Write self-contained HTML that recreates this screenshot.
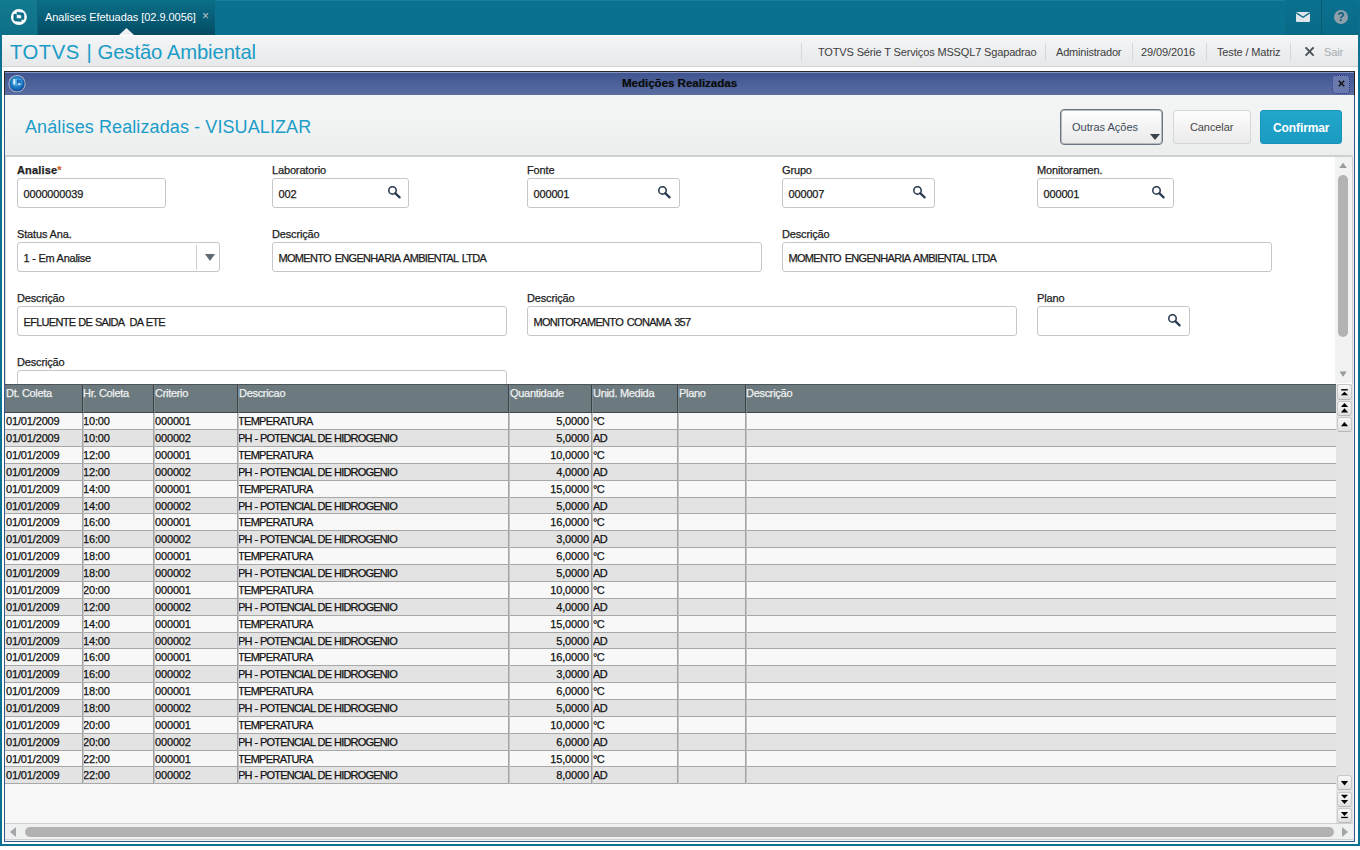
<!DOCTYPE html>
<html><head><meta charset="utf-8"><style>
*{box-sizing:border-box;margin:0;padding:0}
html,body{width:1360px;height:850px;overflow:hidden;background:#fff;font-family:"Liberation Sans",sans-serif;font-size:11px;color:#222;position:relative}
.abs{position:absolute}
.t{position:absolute;white-space:pre;line-height:1;letter-spacing:-0.15px}
.uc,.inp .v.uc{letter-spacing:-0.7px;word-spacing:1.5px}
/* frame */
#frame{position:absolute;left:0;top:0;width:1360px;height:846px;background:#0b7390}
#inner{position:absolute;left:2px;top:35px;width:1356px;height:809px;background:#fff}
/* top bar */
#topbar{position:absolute;left:0;top:0;width:1360px;height:35px;background:#0a7290;border-top:1px solid #17809a}
#logo{position:absolute;left:0;top:0;width:38px;height:35px;background:linear-gradient(#137a8f,#0d7088);border-right:1px solid #0b6379}
#tab{position:absolute;left:38px;top:0;width:177px;height:35px;background:linear-gradient(#0b6f88,#06556e 75%,#054a63)}
#mailbox{position:absolute;left:1285px;top:0;width:37px;height:35px;background:linear-gradient(#0b7190,#086a86);border-right:1px solid #0a5a72}
#helpbox{position:absolute;left:1322px;top:0;width:37px;height:35px;background:linear-gradient(#0b7190,#086a86)}
/* header */
#header{position:absolute;left:2px;top:35px;width:1356px;height:32px;background:linear-gradient(#f4f5f6,#e6e8ea);border-top:1px solid #fff;border-bottom:1px solid #d3d6d9}
.hsep{position:absolute;top:7px;width:1px;height:18px;background:#d5d8db}
/* dialog */
#dlg{position:absolute;left:4px;top:71px;width:1351px;height:771px;background:linear-gradient(#f3f4f4 24px,#f2f3f3 50px,#eceded 84px,#eceded);border:1px solid #2e5a8f;border-top:1px solid #2a2a2a}
#dtitle{position:absolute;left:5px;top:72px;width:1349px;height:23px;background:linear-gradient(#40558f,#4a5f98 40%,#5a6da1);border-top:1px solid #8595c4}
.btn{position:absolute;border-radius:3px}
/* form */
#form{position:absolute;left:5px;top:155px;width:1348px;height:229px;background:#fff;border-top:2px solid #cdd0d2;border-left:1px solid #d4d4d4;border-right:1px solid #cfcfcf;border-top-right-radius:3px}
.lbl{position:absolute;white-space:pre;line-height:1;letter-spacing:-0.15px;color:#1e1e1e}
.inp{position:absolute;height:30px;background:#fff;border:1px solid #c4c7cb;border-radius:3px}
.inp .v{position:absolute;left:5.5px;top:9.5px;white-space:pre;line-height:1;color:#1a1a1a;letter-spacing:-0.15px}
.mag{position:absolute;width:14px;height:14px}
/* grid */
#ghead{position:absolute;left:5px;top:384px;width:1331px;height:29px;background:#6c7a7f;border-top:1px solid #4e5558;border-bottom:1px solid #3f4548}
.hdiv{position:absolute;top:0;width:2px;height:28px;background:#3c4245;border-right:1px solid #7d898e}
.htx{position:absolute;top:2.5px;white-space:pre;line-height:1;color:#eef0f0;letter-spacing:-0.3px}
#gbody{position:absolute;left:5px;top:413px;width:1331px;height:410px;background:#f8f8f8}
.row{position:absolute;left:5px;width:1331px}
.rsep{position:absolute;left:5px;width:1331px;height:1px;background:#a8a8a8}
.vline{position:absolute;width:2px;background:#a3a3a3;border-right:1px solid #c4c4c4}
.c{position:absolute;top:3px;white-space:pre;line-height:1;color:#111;letter-spacing:-0.15px;-webkit-text-stroke:0.25px #111}
.c.uc,.inp .v.uc{letter-spacing:-0.7px;word-spacing:1.5px}
.c.r{text-align:right}
#gscroll{position:absolute;left:1336px;top:384px;width:17px;height:439px;background:#e4e4e4}
.sbtn{position:absolute;left:1337px;width:15px;height:15px;border-radius:3px;background:linear-gradient(#f8f8f8,#e0e0e0);border:1px solid #c8c8c8;border-bottom-color:#b8b8b8}
#hscroll{position:absolute;left:5px;top:823px;width:1348px;height:17px;background:#eff0f0;border-top:1px solid #cfcfcf;border-bottom:1px solid #d0d0d0}

.tk{-webkit-text-stroke:0.25px currentColor}
.lbl,.inp .v,.htx{-webkit-text-stroke:0.25px currentColor}

</style></head><body>
<div id="frame"></div><div id="inner"></div>
<div id="topbar"></div>
<div id="logo"><svg class="abs" style="left:0;top:0" width="38" height="35" viewBox="0 0 38 35"><circle cx="18.9" cy="17.1" r="8" fill="#fff"/><g fill="#0b6d87" stroke="#0b6d87" stroke-width="0.5" stroke-linejoin="round"><path d="M17 12.1 L23.2 12.9 L24 13.9 L23.9 19.6 L21.4 19.4 L21.3 15.1 L17 14.6Z"/><path d="M14.2 14 L16.5 14.2 L16.5 18.2 L21.3 18.7 L21.2 21.5 L15.2 21 L13.8 20.1 L13.8 14.6Z"/></g></svg></div>
<div id="tab"><span class="t" style="left:7px;top:12px;color:#fff;font-size:11px;letter-spacing:-0.05px">Analises Efetuadas [02.9.0056]</span><span class="t" style="left:164px;top:10px;color:#b9c6cf;font-size:12px">×</span>
<svg class="abs" style="left:81px;top:28px" width="15" height="7" viewBox="0 0 15 7"><path d="M0 7 L7.5 0 L15 7Z" fill="#eef0f2"/></svg></div>
<div id="mailbox"><svg class="abs" style="left:11px;top:12px" width="14" height="10" viewBox="0 0 14 10"><rect x="0" y="0" width="14" height="10" rx="1" fill="#dfe5ea"/><path d="M0.3 0.8 L7 5.3 L13.7 0.8" fill="none" stroke="#0a6a86" stroke-width="1.3"/></svg></div>
<div id="helpbox"><svg class="abs" style="left:12px;top:10px" width="14" height="14" viewBox="0 0 14 14"><circle cx="7" cy="7" r="7" fill="#8d9fab"/><text x="7" y="11.2" text-anchor="middle" font-family="Liberation Sans" font-weight="bold" font-size="12" fill="#07607a">?</text></svg></div>

<div id="header">
<span class="t" style="left:8px;top:5.5px;font-size:20.3px;color:#1b9cc6;letter-spacing:0.5px">TOTVS</span><span class="t" style="left:84.5px;top:5.5px;font-size:20.3px;color:#1b9cc6">|</span><span class="t" style="left:95.5px;top:5.5px;font-size:20.3px;color:#1b9cc6;letter-spacing:-0.1px">Gestão Ambiental</span>
<div class="hsep" style="left:799px"></div>
<span class="t" style="left:816px;top:11px;color:#3d3d3d;letter-spacing:-0.15px">TOTVS Série T Serviços MSSQL7 Sgapadrao</span>
<div class="hsep" style="left:1043px"></div>
<span class="t" style="left:1054px;top:11px;color:#3d3d3d;letter-spacing:-0.2px">Administrador</span>
<div class="hsep" style="left:1130px"></div>
<span class="t" style="left:1139px;top:11px;color:#3d3d3d;letter-spacing:-0.1px">29/09/2016</span>
<div class="hsep" style="left:1204px"></div>
<span class="t" style="left:1215px;top:11px;color:#3d3d3d;letter-spacing:-0.15px">Teste / Matriz</span>
<div class="hsep" style="left:1288px"></div>
<svg class="abs" style="left:1302px;top:10px" width="11" height="11" viewBox="0 0 11 11"><path d="M1.6 1.4 L9.6 9.6 M9.6 1.4 L1.6 9.6" stroke="#4a5157" stroke-width="2"/></svg>
<span class="t" style="left:1322px;top:11px;color:#a9adb1">Sair</span>
</div>

<div id="dlg"></div><div class="abs" style="left:4px;top:71px;width:1px;height:24px;background:#2b2b2b"></div><div class="abs" style="left:1354px;top:71px;width:1px;height:24px;background:#222"></div>
<div id="dtitle">
<svg class="abs" style="left:3px;top:1px" width="19" height="19" viewBox="0 0 19 19"><defs><radialGradient id="gl" cx="0.45" cy="0.4" r="0.65"><stop offset="0" stop-color="#5cc4ec"/><stop offset="0.55" stop-color="#1d78c4"/><stop offset="1" stop-color="#0f4796"/></radialGradient></defs><circle cx="9" cy="9.7" r="8.6" fill="#bdbfc6"/><circle cx="9" cy="9.7" r="7.7" fill="url(#gl)"/><rect x="5.2" y="5" width="2" height="5.5" fill="#e6f6ff" opacity="0.9"/><rect x="8.6" y="5.2" width="4.6" height="5.6" fill="#1b6cc0" stroke="#58b4e6" stroke-width="0.7"/><path d="M9.6 10.8 L11.2 8.4 L12.8 10.8Z" fill="#def4ff"/></svg>
<span class="t" style="left:617px;top:4px;font-weight:bold;font-size:11.6px;color:#0b0b0b;letter-spacing:-0.05px;text-shadow:0 0 1px rgba(0,0,0,.4)">Medições Realizadas</span>
<div class="abs" style="left:1327px;top:1.5px;width:18px;height:19px;border-radius:4px;background:#6a7aac;border:1px dotted #2a2f8a"></div>
<svg class="abs" style="left:1332.5px;top:7px" width="7" height="7" viewBox="0 0 7 7"><path d="M0.8 0.8 L6.2 6.2 M6.2 0.8 L0.8 6.2" stroke="#111" stroke-width="1.5"/></svg>
</div>

<span class="t" style="left:25px;top:117.5px;font-size:18px;color:#1b9dc8;letter-spacing:0.1px">Análises Realizadas - VISUALIZAR</span>

<div class="btn" style="left:1060px;top:109px;width:103px;height:36px;border:1px solid #6c7680;border-radius:4px;box-shadow:inset 0 0 0 1px #b4bbc1;background:linear-gradient(#fefefe,#e9e9e9)"></div>
<span class="t" style="left:1072px;top:122px;color:#3b4a58;letter-spacing:0px">Outras Ações</span>
<svg class="abs" style="left:1150px;top:134px" width="10" height="6" viewBox="0 0 10 6"><path d="M0 0 L10 0 L5 6Z" fill="#3a434c"/></svg>
<div class="btn" style="left:1173px;top:110px;width:78px;height:34px;border:1px solid #d6d6d6;background:linear-gradient(#fdfdfd,#eaeaea)"></div>
<span class="t" style="left:1190px;top:122px;color:#474747;letter-spacing:-0.1px">Cancelar</span>
<div class="btn" style="left:1260px;top:110px;width:82px;height:34px;border:1px solid #1b93b9;background:linear-gradient(#22a6ca,#1b9bc2)"></div>
<span class="t" style="left:1273px;top:122px;color:#fff;font-weight:bold;font-size:12px;letter-spacing:-0.1px">Confirmar</span>

<div id="form"></div>
<!-- row 1 -->
<span class="lbl" style="left:17px;top:165px;font-weight:bold;letter-spacing:0.15px">Analise<span style="color:#d0692e">*</span></span>
<div class="inp" style="left:17px;top:178px;width:149px"><span class="v">0000000039</span></div>
<span class="lbl" style="left:272px;top:165px">Laboratorio</span>
<div class="inp" style="left:272px;top:178px;width:137px"><span class="v">002</span></div>
<span class="lbl" style="left:527px;top:165px">Fonte</span>
<div class="inp" style="left:527px;top:178px;width:153px"><span class="v">000001</span></div>
<span class="lbl" style="left:782px;top:165px">Grupo</span>
<div class="inp" style="left:782px;top:178px;width:153px"><span class="v">000007</span></div>
<span class="lbl" style="left:1037px;top:165px">Monitoramen.</span>
<div class="inp" style="left:1037px;top:178px;width:137px"><span class="v">000001</span></div>
<!-- row 2 -->
<span class="lbl" style="left:17px;top:229px">Status Ana.</span>
<div class="inp" style="left:17px;top:242px;width:203px"><span class="v" style="letter-spacing:-0.25px">1 - Em Analise</span><div class="abs" style="left:178px;top:2px;width:1px;height:25px;background:#d0d0d0"></div><svg class="abs" style="left:187px;top:11px" width="10" height="7" viewBox="0 0 10 7"><path d="M0 0 L10 0 L5 7Z" fill="#5e6a73"/></svg></div>
<span class="lbl" style="left:272px;top:229px">Descrição</span>
<div class="inp" style="left:272px;top:242px;width:490px"><span class="v uc">MOMENTO ENGENHARIA AMBIENTAL LTDA</span></div>
<span class="lbl" style="left:782px;top:229px">Descrição</span>
<div class="inp" style="left:782px;top:242px;width:490px"><span class="v uc">MOMENTO ENGENHARIA AMBIENTAL LTDA</span></div>
<!-- row 3 -->
<span class="lbl" style="left:17px;top:293px">Descrição</span>
<div class="inp" style="left:17px;top:306px;width:490px"><span class="v uc" style="word-spacing:0.5px">EFLUENTE DE SAIDA  DA ETE</span></div>
<span class="lbl" style="left:527px;top:293px">Descrição</span>
<div class="inp" style="left:527px;top:306px;width:490px"><span class="v uc">MONITORAMENTO CONAMA 357</span></div>
<span class="lbl" style="left:1037px;top:293px">Plano</span>
<div class="inp" style="left:1037px;top:306px;width:153px"></div>
<!-- row 4 -->
<span class="lbl" style="left:17px;top:357px">Descrição</span>
<div class="inp" style="left:17px;top:370px;width:490px;height:30px"></div>
<!-- magnifiers -->
<svg class="mag" style="left:388px;top:186px" viewBox="0 0 14 14"><circle cx="4.5" cy="4.4" r="3.7" fill="none" stroke="#2c3d52" stroke-width="1.6"/><path d="M7.2 7.2 L11.6 11.4" stroke="#2c3d52" stroke-width="2.3" stroke-linecap="round"/></svg>
<svg class="mag" style="left:658px;top:186px" viewBox="0 0 14 14"><circle cx="4.5" cy="4.4" r="3.7" fill="none" stroke="#2c3d52" stroke-width="1.6"/><path d="M7.2 7.2 L11.6 11.4" stroke="#2c3d52" stroke-width="2.3" stroke-linecap="round"/></svg>
<svg class="mag" style="left:913px;top:186px" viewBox="0 0 14 14"><circle cx="4.5" cy="4.4" r="3.7" fill="none" stroke="#2c3d52" stroke-width="1.6"/><path d="M7.2 7.2 L11.6 11.4" stroke="#2c3d52" stroke-width="2.3" stroke-linecap="round"/></svg>
<svg class="mag" style="left:1152px;top:186px" viewBox="0 0 14 14"><circle cx="4.5" cy="4.4" r="3.7" fill="none" stroke="#2c3d52" stroke-width="1.6"/><path d="M7.2 7.2 L11.6 11.4" stroke="#2c3d52" stroke-width="2.3" stroke-linecap="round"/></svg>
<svg class="mag" style="left:1168px;top:314px" viewBox="0 0 14 14"><circle cx="4.5" cy="4.4" r="3.7" fill="none" stroke="#2c3d52" stroke-width="1.6"/><path d="M7.2 7.2 L11.6 11.4" stroke="#2c3d52" stroke-width="2.3" stroke-linecap="round"/></svg>
<!-- form scrollbar -->
<div class="abs" style="left:1335px;top:157px;width:17px;height:226px;background:#f2f2f2;border-bottom-right-radius:3px"></div>
<svg class="abs" style="left:1339px;top:162px" width="9" height="7" viewBox="0 0 9 7"><path d="M0.3 5.9 L4 0.7 L7.8 5.9Z" fill="#959b9e"/></svg>
<div class="abs" style="left:1338px;top:175px;width:10px;height:161.5px;border-radius:5px;background:#b3b3b3"></div>
<svg class="abs" style="left:1339px;top:371px" width="9" height="7" viewBox="0 0 9 7"><path d="M0.5 0.5 L7.7 0.5 L4.1 5.8Z" fill="#959b9e"/></svg>

<!-- grid -->
<div id="gbody"></div>
<div id="ghead"><div class="hdiv" style="left:77px"></div><div class="hdiv" style="left:148px"></div><div class="hdiv" style="left:232px"></div><div class="hdiv" style="left:503px"></div><div class="hdiv" style="left:586px"></div><div class="hdiv" style="left:672px"></div><div class="hdiv" style="left:740px"></div>
<span class="htx" style="left:1px">Dt. Coleta</span>
<span class="htx" style="left:78px">Hr. Coleta</span>
<span class="htx" style="left:150px">Criterio</span>
<span class="htx" style="left:234px">Descricao</span>
<span class="htx" style="left:505px">Quantidade</span>
<span class="htx" style="left:588px">Unid. Medida</span>
<span class="htx" style="left:674px">Plano</span>
<span class="htx" style="left:741px">Descrição</span>
</div>
<div class="row" style="top:413px;height:16px;background:#f8f8f8"><span class="c" style="left:1px">01/01/2009</span><span class="c" style="left:78px">10:00</span><span class="c" style="left:150px">000001</span><span class="c uc" style="left:233px">TEMPERATURA</span><span class="c r" style="left:503px;width:81px">5,0000</span><span class="c uc" style="left:588px">°C</span></div><div class="rsep" style="top:429px"></div>
<div class="row" style="top:430px;height:16px;background:#e3e3e3"><span class="c" style="left:1px">01/01/2009</span><span class="c" style="left:78px">10:00</span><span class="c" style="left:150px">000002</span><span class="c uc" style="left:233px;letter-spacing:-0.8px;word-spacing:0.5px">PH - POTENCIAL DE HIDROGENIO</span><span class="c r" style="left:503px;width:81px">5,0000</span><span class="c uc" style="left:588px">AD</span></div><div class="rsep" style="top:446px"></div>
<div class="row" style="top:447px;height:16px;background:#f8f8f8"><span class="c" style="left:1px">01/01/2009</span><span class="c" style="left:78px">12:00</span><span class="c" style="left:150px">000001</span><span class="c uc" style="left:233px">TEMPERATURA</span><span class="c r" style="left:503px;width:81px">10,0000</span><span class="c uc" style="left:588px">°C</span></div><div class="rsep" style="top:463px"></div>
<div class="row" style="top:464px;height:16px;background:#e3e3e3"><span class="c" style="left:1px">01/01/2009</span><span class="c" style="left:78px">12:00</span><span class="c" style="left:150px">000002</span><span class="c uc" style="left:233px;letter-spacing:-0.8px;word-spacing:0.5px">PH - POTENCIAL DE HIDROGENIO</span><span class="c r" style="left:503px;width:81px">4,0000</span><span class="c uc" style="left:588px">AD</span></div><div class="rsep" style="top:480px"></div>
<div class="row" style="top:481px;height:16px;background:#f8f8f8"><span class="c" style="left:1px">01/01/2009</span><span class="c" style="left:78px">14:00</span><span class="c" style="left:150px">000001</span><span class="c uc" style="left:233px">TEMPERATURA</span><span class="c r" style="left:503px;width:81px">15,0000</span><span class="c uc" style="left:588px">°C</span></div><div class="rsep" style="top:497px"></div>
<div class="row" style="top:498px;height:15px;background:#e3e3e3"><span class="c" style="left:1px">01/01/2009</span><span class="c" style="left:78px">14:00</span><span class="c" style="left:150px">000002</span><span class="c uc" style="left:233px;letter-spacing:-0.8px;word-spacing:0.5px">PH - POTENCIAL DE HIDROGENIO</span><span class="c r" style="left:503px;width:81px">5,0000</span><span class="c uc" style="left:588px">AD</span></div><div class="rsep" style="top:513px"></div>
<div class="row" style="top:514px;height:16px;background:#f8f8f8"><span class="c" style="left:1px">01/01/2009</span><span class="c" style="left:78px">16:00</span><span class="c" style="left:150px">000001</span><span class="c uc" style="left:233px">TEMPERATURA</span><span class="c r" style="left:503px;width:81px">16,0000</span><span class="c uc" style="left:588px">°C</span></div><div class="rsep" style="top:530px"></div>
<div class="row" style="top:531px;height:16px;background:#e3e3e3"><span class="c" style="left:1px">01/01/2009</span><span class="c" style="left:78px">16:00</span><span class="c" style="left:150px">000002</span><span class="c uc" style="left:233px;letter-spacing:-0.8px;word-spacing:0.5px">PH - POTENCIAL DE HIDROGENIO</span><span class="c r" style="left:503px;width:81px">3,0000</span><span class="c uc" style="left:588px">AD</span></div><div class="rsep" style="top:547px"></div>
<div class="row" style="top:548px;height:16px;background:#f8f8f8"><span class="c" style="left:1px">01/01/2009</span><span class="c" style="left:78px">18:00</span><span class="c" style="left:150px">000001</span><span class="c uc" style="left:233px">TEMPERATURA</span><span class="c r" style="left:503px;width:81px">6,0000</span><span class="c uc" style="left:588px">°C</span></div><div class="rsep" style="top:564px"></div>
<div class="row" style="top:565px;height:16px;background:#e3e3e3"><span class="c" style="left:1px">01/01/2009</span><span class="c" style="left:78px">18:00</span><span class="c" style="left:150px">000002</span><span class="c uc" style="left:233px;letter-spacing:-0.8px;word-spacing:0.5px">PH - POTENCIAL DE HIDROGENIO</span><span class="c r" style="left:503px;width:81px">5,0000</span><span class="c uc" style="left:588px">AD</span></div><div class="rsep" style="top:581px"></div>
<div class="row" style="top:582px;height:16px;background:#f8f8f8"><span class="c" style="left:1px">01/01/2009</span><span class="c" style="left:78px">20:00</span><span class="c" style="left:150px">000001</span><span class="c uc" style="left:233px">TEMPERATURA</span><span class="c r" style="left:503px;width:81px">10,0000</span><span class="c uc" style="left:588px">°C</span></div><div class="rsep" style="top:598px"></div>
<div class="row" style="top:599px;height:16px;background:#e3e3e3"><span class="c" style="left:1px">01/01/2009</span><span class="c" style="left:78px">12:00</span><span class="c" style="left:150px">000002</span><span class="c uc" style="left:233px;letter-spacing:-0.8px;word-spacing:0.5px">PH - POTENCIAL DE HIDROGENIO</span><span class="c r" style="left:503px;width:81px">4,0000</span><span class="c uc" style="left:588px">AD</span></div><div class="rsep" style="top:615px"></div>
<div class="row" style="top:616px;height:16px;background:#f8f8f8"><span class="c" style="left:1px">01/01/2009</span><span class="c" style="left:78px">14:00</span><span class="c" style="left:150px">000001</span><span class="c uc" style="left:233px">TEMPERATURA</span><span class="c r" style="left:503px;width:81px">15,0000</span><span class="c uc" style="left:588px">°C</span></div><div class="rsep" style="top:632px"></div>
<div class="row" style="top:633px;height:15px;background:#e3e3e3"><span class="c" style="left:1px">01/01/2009</span><span class="c" style="left:78px">14:00</span><span class="c" style="left:150px">000002</span><span class="c uc" style="left:233px;letter-spacing:-0.8px;word-spacing:0.5px">PH - POTENCIAL DE HIDROGENIO</span><span class="c r" style="left:503px;width:81px">5,0000</span><span class="c uc" style="left:588px">AD</span></div><div class="rsep" style="top:648px"></div>
<div class="row" style="top:649px;height:16px;background:#f8f8f8"><span class="c" style="left:1px">01/01/2009</span><span class="c" style="left:78px">16:00</span><span class="c" style="left:150px">000001</span><span class="c uc" style="left:233px">TEMPERATURA</span><span class="c r" style="left:503px;width:81px">16,0000</span><span class="c uc" style="left:588px">°C</span></div><div class="rsep" style="top:665px"></div>
<div class="row" style="top:666px;height:16px;background:#e3e3e3"><span class="c" style="left:1px">01/01/2009</span><span class="c" style="left:78px">16:00</span><span class="c" style="left:150px">000002</span><span class="c uc" style="left:233px;letter-spacing:-0.8px;word-spacing:0.5px">PH - POTENCIAL DE HIDROGENIO</span><span class="c r" style="left:503px;width:81px">3,0000</span><span class="c uc" style="left:588px">AD</span></div><div class="rsep" style="top:682px"></div>
<div class="row" style="top:683px;height:16px;background:#f8f8f8"><span class="c" style="left:1px">01/01/2009</span><span class="c" style="left:78px">18:00</span><span class="c" style="left:150px">000001</span><span class="c uc" style="left:233px">TEMPERATURA</span><span class="c r" style="left:503px;width:81px">6,0000</span><span class="c uc" style="left:588px">°C</span></div><div class="rsep" style="top:699px"></div>
<div class="row" style="top:700px;height:16px;background:#e3e3e3"><span class="c" style="left:1px">01/01/2009</span><span class="c" style="left:78px">18:00</span><span class="c" style="left:150px">000002</span><span class="c uc" style="left:233px;letter-spacing:-0.8px;word-spacing:0.5px">PH - POTENCIAL DE HIDROGENIO</span><span class="c r" style="left:503px;width:81px">5,0000</span><span class="c uc" style="left:588px">AD</span></div><div class="rsep" style="top:716px"></div>
<div class="row" style="top:717px;height:16px;background:#f8f8f8"><span class="c" style="left:1px">01/01/2009</span><span class="c" style="left:78px">20:00</span><span class="c" style="left:150px">000001</span><span class="c uc" style="left:233px">TEMPERATURA</span><span class="c r" style="left:503px;width:81px">10,0000</span><span class="c uc" style="left:588px">°C</span></div><div class="rsep" style="top:733px"></div>
<div class="row" style="top:734px;height:16px;background:#e3e3e3"><span class="c" style="left:1px">01/01/2009</span><span class="c" style="left:78px">20:00</span><span class="c" style="left:150px">000002</span><span class="c uc" style="left:233px;letter-spacing:-0.8px;word-spacing:0.5px">PH - POTENCIAL DE HIDROGENIO</span><span class="c r" style="left:503px;width:81px">6,0000</span><span class="c uc" style="left:588px">AD</span></div><div class="rsep" style="top:750px"></div>
<div class="row" style="top:751px;height:15px;background:#f8f8f8"><span class="c" style="left:1px">01/01/2009</span><span class="c" style="left:78px">22:00</span><span class="c" style="left:150px">000001</span><span class="c uc" style="left:233px">TEMPERATURA</span><span class="c r" style="left:503px;width:81px">15,0000</span><span class="c uc" style="left:588px">°C</span></div><div class="rsep" style="top:766px"></div>
<div class="row" style="top:767px;height:16px;background:#e3e3e3"><span class="c" style="left:1px">01/01/2009</span><span class="c" style="left:78px">22:00</span><span class="c" style="left:150px">000002</span><span class="c uc" style="left:233px;letter-spacing:-0.8px;word-spacing:0.5px">PH - POTENCIAL DE HIDROGENIO</span><span class="c r" style="left:503px;width:81px">8,0000</span><span class="c uc" style="left:588px">AD</span></div><div class="rsep" style="top:783px"></div><div class="vline" style="left:82px;top:413px;height:371px"></div><div class="vline" style="left:153px;top:413px;height:371px"></div><div class="vline" style="left:237px;top:413px;height:371px"></div><div class="vline" style="left:508px;top:413px;height:371px"></div><div class="vline" style="left:591px;top:413px;height:371px"></div><div class="vline" style="left:677px;top:413px;height:371px"></div><div class="vline" style="left:745px;top:413px;height:371px"></div>
<div id="gscroll"></div>
<div class="sbtn" style="top:384px;height:16px"></div>
<div class="sbtn" style="top:401px;height:15px"></div>
<div class="sbtn" style="top:417px;height:15px"></div>
<div class="sbtn" style="top:775px;height:15px"></div>
<div class="sbtn" style="top:792px;height:15px"></div>
<div class="sbtn" style="top:808px;height:15px"></div>
<svg class="abs" style="left:1332px;top:380px" width="24" height="56" viewBox="0 0 24 56"><g fill="#000"><rect x="9.2" y="9.1" width="6.6" height="1.4"/><path d="M8.9 15.3 L12.5 11.7 L16.1 15.3Z"/><path d="M8.9 27.1 L12.5 23 L16.1 27.1Z"/><path d="M8.9 32.4 L12.5 28.3 L16.1 32.4Z"/><path d="M8.9 46.2 L12.5 42.1 L16.1 46.2Z"/></g></svg>
<svg class="abs" style="left:1332px;top:770px" width="24" height="56" viewBox="0 0 24 56"><g fill="#000"><path d="M8.9 10.9 L12.5 15.6 L16.1 10.9Z"/><path d="M8.9 24.8 L12.5 28.4 L16.1 24.8Z"/><path d="M8.9 30 L12.5 34 L16.1 30Z"/><path d="M8.9 42.1 L12.5 45.9 L16.1 42.1Z"/><rect x="9.2" y="46.8" width="6.6" height="1.3"/></g></svg>
<div id="hscroll"></div>
<svg class="abs" style="left:10px;top:827px" width="6" height="10" viewBox="0 0 6 10"><path d="M6 0 L0 5 L6 10Z" fill="#a2a6aa"/></svg>
<div class="abs" style="left:25px;top:827px;width:1309px;height:10px;border-radius:5px;background:#b1b1b1"></div>
<svg class="abs" style="left:1342px;top:827px" width="6" height="10" viewBox="0 0 6 10"><path d="M0 0 L6 5 L0 10Z" fill="#a2a6aa"/></svg>

</body></html>
